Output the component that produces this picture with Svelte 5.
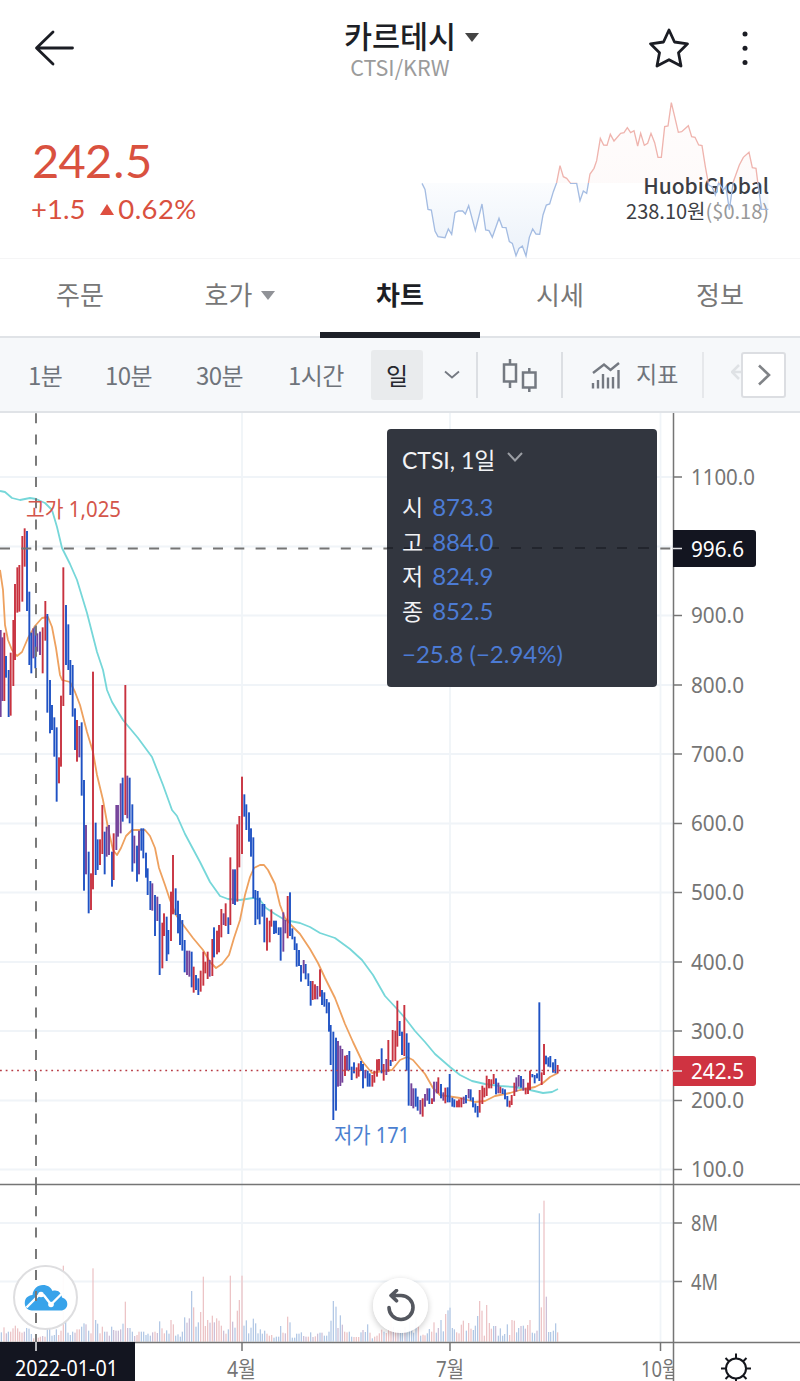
<script lang="ts">
	type Bar = { x: number; top: number; bottom: number; tone: string };

	const TABS = ['주문', '호가', '차트', '시세', '정보'];
	const RANGES = ['1분', '10분', '30분', '1시간'];
	let activeTab = $state('차트');

	const OHLC = [
		['시', '873.3'],
		['고', '884.0'],
		['저', '824.9'],
		['종', '852.5']
	];

	const PRICE_TICKS = [
		[477, '1100.0'],
		[615.5, '900.0'],
		[685, '800.0'],
		[754, '700.0'],
		[823.5, '600.0'],
		[892.5, '500.0'],
		[962, '400.0'],
		[1031, '300.0'],
		[1100.5, '200.0'],
		[1169.5, '100.0']
	] as const;
	const GRID_Y = [477, 546.5, 615.5, 685, 754, 823.5, 892.5, 962, 1031, 1100.5, 1169.5, 1223, 1281.5];
	const GRID_X = [242, 450, 660.5];

	// r = hausse, b = baisse, m = mixte. Coordonnées en tiers de pixel : x haut bas
	const CANDLES_A = `2 660 921m,7 682 873m,13 668 873r,18 738 803b,26 780 921b,32 728 917r,40 630 828r,45 522 750r,52 472 608r,58 465 605r,
67 378 575r,74 355 470r,81 363 603b,88 545 765b,94 668 790b,100 655 745m,106 650 775b,112 670 725m,120 665 735m,128 652 790r,
136 573 692r,142 612 908b,150 810 970b,156 885 960b,163 922 1040b,170 952 1175b,177 1042 1120r,183 857 1070r,190 472 888r,
198 585 765b,205 643 780b,211 750 855b,218 765 920b`;
	const CANDLES_B = `225 85 210b,231 120 245r,238 138 232m,245 127 347b,252 300 632b,258 435 583m,266 515 700b,273 580 690r,279 -25 628r,
287 428 585b,293 478 570b,300 478 555r,307 375 522r,314 455 583b,320 440 530m,327 435 525m,336 515 620b,341 460 600r,349 375 510m,
354 375 470m,362 310 460m,368 293 425b,376 15 405r,382 287 415m,389 293 430b,397 373 575b,403 467 550m,411 497 605b,417 452 583m,
424 445 512b,430 445 535b,438 518 593b,443 565 645b,451 603 690b,457 610 692m,465 645 768b,472 650 723m,479 672 885b,487 728 865r,
492 700 768r,500 710 843b,505 750 823b,513 635 783r,519 525 703r,527 625 705b,534 662 760b,540 702 795b,547 720 812b,554 780 877b,
561 812 885m,568 812 890m,575 815 922b,581 860 938r,588 885 930b,595 895 945b,602 872 935r,610 815 917r,616 845 880r,623 815 897r,
629 840 890m,637 777 888r,642 742 832b,651 752 823r,657 735 817r,664 687 772r,671 700 735m,677 670 738r,685 712 762b,691 532 735r,
699 568 672m,705 568 675b,712 433 665r,718 408 562r,726 290 522r,733 343 410b,739 373 450b,747 397 485b,753 445 530b,760 472 655b,
766 630 735b,773 633 718b,779 653 733b,787 672 710b,793 672 787b,801 713 812r,809 722 787r,814 688 740r,822 722 762b,828 722 760b,
836 742 765b,842 742 842b,850 697 815m,856 720 760m,863 648 775r,870 637 768b,877 745 778b,884 770 810b`;
	const CANDLES_C = `170 250 320b,177 270 318b,183 315 365b,191 300 340m,197 312 358b,205 340 378b,212 363 437b,218 363 420r,225 373 418r,
232 378 418m,240 328 410r,246 390 435b,253 397 440b,260 417 460b,267 427 515b,272 495 615b,280 515 780b,288 533 752b,294 543 680m,
301 557 678m,307 567 668m,315 587 648r,321 585 632m,328 573 630b,335 620 660b,342 607 640b,350 622 655r,356 610 650r,363 603 633b,
369 612 685b,376 630 655m,383 632 680b,389 640 680b,397 645 680r,403 632 668r,411 598 650r,417 597 632r,425 565 640b,431 612 662r,
439 597 645m,445 540 635r,452 600 618b,458 510 605r,466 512 603r,472 422 560r,479 483 528b,486 515 585b,493 435 588r,500 520 632b,
506 548 737b,514 670 738m,520 685 745m,527 685 740b,533 710 752b,541 720 763m,548 715 770r,555 702 740m,562 685 722m,568 685 732b,
576 715 732r,582 665 725m,590 665 700m,595 652 700r,603 672 715b,610 697 722m,616 683 730r,623 682 727b,629 642 727b,637 713 740b,
643 718 742b,651 722 742r,657 718 742r,664 713 742r,671 710 732m,678 705 730b,686 687 715m,692 688 722b,699 712 742b,706 730 758b,
713 738 772b,719 690 758r,727 677 732r,733 683 712r,740 647 708r,747 657 685r,754 658 685r,761 642 672r,768 655 703b,775 668 700m,
781 680 700r,788 685 702b,795 688 718b,802 708 740b,809 722 742r,815 705 735r,823 668 708r,829 652 695m,836 645 680m,843 648 683b,
850 657 692m,857 683 703r,864 668 702r,870 632 690r,877 642 652b,884 645 670b,891 640 655b,898 427 663b,905 637 675r,912 552 645r,
918 587 613b,925 592 620b,931 588 622b,939 607 638b,946 597 640b,953 615 640r`;

	const VOLUMES = `4 487b,12 472r,19 490m,25 485b,32 485r,39 475r,46 467r,53 475r,59 485r,66 488r,73 485m,80 474b,87 476b,94 492b,101 505r,
108 500m,115 503r,121 500r,128 498m,135 500r,142 475b,149 477b,156 497b,163 495b,169 478b,176 495r,183 482r,190 287r,197 455b,204 488b,
211 495b,218 485b,225 488m,231 478r,238 478r,245 470b,252 460b,258 463m,266 482b,273 490r,279 295r,287 450b,293 461b,300 490r,307 470r,
314 485b,321 485m,328 497m,335 470b,341 480m,348 482m,355 482m,362 478m,369 461b,376 395r,383 474m,390 474b,397 485b,404 498m,411 495r,
417 485r,424 485b,431 485b,438 495b,444 491b,451 497b,458 487m,465 485r,472 489m,479 454b,486 475r,493 490r,500 481b,507 491b,513 450r,
520 463r,527 497b,534 493b,541 500b,547 485b,554 442b,561 458m,568 445m,575 363b,581 412r,588 470b,595 457b,602 426r,610 320r,616 468r,
623 450r,630 458m,637 437r,643 457m,650 445r,657 452r,664 467r,671 482m,678 491r,685 478b,691 317r,698 455m,705 473b,712 422r,718 390r,
726 317r,732 467b,739 451b,746 490b,753 473b,760 446b,767 460b,774 490b,781 478b,787 491b,794 482b,801 491r,808 497r,815 495r,822 503b,
829 500b,836 500b,842 468b,849 488r,856 490m,863 440r,870 457b,877 503b,884 503b,890 491b,897 491b,904 487b,911 498m,918 500m,925 500r,
932 487b,939 501m,946 499r,953 491m,960 488b,966 488m,973 497b,980 497b,987 485b,993 452b,1000 393b,1008 410b,1014 474m,1021 436b,
1027 464m,1034 485r,1041 487r,1048 485b,1055 500b,1062 501r,1069 501r,1076 501r,1083 487b,1089 480m,1096 486b,1103 463b,1110 488r,
1117 505b,1124 500r,1131 497r,1138 490r,1145 479r,1152 485b,1159 489r,1166 480r,1173 445r,1180 470m,1187 485r,1194 480m,1201 480b,
1207 488b,1215 470m,1221 487b,1228 455b,1235 480b,1241 488b,1248 440b,1255 470r,1262 497b,1269 494r,1275 496r,1282 490b,1288 477b,
1295 485r,1302 457r,1309 488b,1315 474m,1323 450b,1330 484b,1337 432r,1344 421b,1350 413b,1357 474b,1363 478b,1370 487r,1377 490r,
1384 464r,1390 452r,1399 482b,1406 459r,1413 476r,1420 480b,1426 467b,1433 438b,1439 393r,1446 422r,1453 497r,1460 405r,1468 459r,
1474 476r,1481 468b,1487 468m,1495 497b,1501 475b,1508 497b,1514 492b,1522 463b,1529 495r,1536 450r,1543 452r,1550 487b,1556 474b,
1563 468m,1570 467b,1576 476m,1583 465r,1590 450r,1597 488b,1604 490b,1611 482m,1618 130b,1624 412r,1632 92r,1639 380m,1646 486b,
1652 486b,1660 482b,1667 460b,1673 487r`;

	const MA_SLOW = `0,491 5,492 12,498 20,500 30,498 36,499 45,503 52,510 57,527 62,548 70,564 77,580 87,613 97,652 103,670 107,690 112,702
123,720 138,738 152,757 163,785 172,810 177,816 185,834 200,862 210,882 220,896 228,899 240,900 253,898 260,900 266,908 275,914 285,920
300,923 310,927 320,933 335,938 350,949 362,960 373,975 385,996 398,1010 405,1018 415,1031 425,1042 435,1054 450,1067 460,1075 472,1081
485,1084 500,1086 515,1087 530,1090 543,1093 552,1092 558,1089`;
	const MA_FAST = `0,570 3,590 5,625 8,640 12,650 17,656 22,652 28,638 35,626 42,618 48,617 52,627 56,648 60,675 62,680 70,682 75,692
80,705 87,732 93,752 97,775 103,800 108,828 113,850 117,855 121,848 126,836 132,830 145,830 150,836 155,848 159,868 165,885 170,900
176,915 184,926 193,938 203,950 210,962 216,968 222,964 229,955 234,938 240,920 245,895 250,877 254,868 260,865 264,865 268,870 275,884
280,905 285,918 292,926 300,934 310,949 318,963 325,978 335,998 345,1024 353,1042 362,1061 372,1073 382,1071 392,1070 400,1060 407,1057
413,1060 425,1074 433,1088 440,1095 460,1098 475,1102 485,1101 495,1096 510,1093 520,1090 535,1087 543,1083 550,1077 558,1073`;

	const SPARK = `66,550 75,568 84,628 94,630 105,693 114,710 135,713 145,687 155,703 165,638 175,633 188,633 196,642 206,617 226,692
246,612 257,690 267,692 277,712 297,655 307,682 318,683 328,725 337,730 348,767 357,745 367,738 378,768 388,712 398,687 408,702 419,703
429,645 439,615 449,612 460,575 470,548 480,497 490,530 500,535 512,550 530,550 540,602 550,573 560,580 570,522 582,505 590,482 601,415
611,435 621,436 631,403 642,423 662,400 672,398 682,383 692,398 702,392 713,438 722,400 733,436 743,430 753,400 764,428 774,472 784,472
794,380 804,378 814,308 824,350 835,397 845,395 865,377 875,410 885,412 896,435 906,437 916,500 926,555 936,560 946,585 956,548 970,570
978,560 988,630 1000,545 1018,495 1030,472 1047,457 1057,503 1068,505 1075,560 1085,628 1105,628`;

	function parse(src: string, ox = 0, oy = 0): Bar[] {
		return src.split(',').map((s) => {
			const tone = s.slice(-1);
			const [x, top, bottom = 515] = s.trim().slice(0, -1).split(' ').map(Number);
			return { x: ox + x / 3, top: oy + top / 3, bottom: oy + bottom / 3, tone };
		});
	}

	const candles = [...parse(CANDLES_A, 0, 410), ...parse(CANDLES_B, 0, 680), ...parse(CANDLES_C, 240, 860)];
	const volumes = parse(VOLUMES, 0, 1170);
</script>

<div class="app">
	<header>
		<button class="icon back" aria-label="뒤로">
			<svg width="40" height="38" viewBox="0 0 40 38"><path d="M19 3 2.500 19 19 35M3 19h35.500" /></svg>
		</button>
		<div class="title">
			<h1>카르테시<i class="caret"></i></h1>
			<p>CTSI/KRW</p>
		</div>
		<button class="icon star" aria-label="관심">
			<svg width="42" height="42" viewBox="0 0 42 42"
				><path d="M21 3 26.500 15 39.500 16.800 30.500 25.800 33 39 21 32.700 9 39 11.500 25.800 2.500 16.800 15.500 15Z" /></svg
			>
		</button>
		<button class="icon more" aria-label="더보기">
			<svg width="8" height="36" viewBox="0 0 8 36"
				><circle cx="4" cy="4" r="2.500" /><circle cx="4" cy="18.300" r="2.500" /><circle cx="4" cy="32.600" r="2.500" /></svg
			>
		</button>
	</header>

	<section class="quote">
		<div class="now">
			<strong>242<em>.</em>5</strong>
			<p><span>+1.5</span><i class="up"></i><span class="pct">0.62%</span></p>
		</div>
		<div class="global">
			<b>HuobiGlobal</b>
			<p>238.10원<span>($0.18)</span></p>
		</div>
		<svg class="spark" width="400" height="260" viewBox="0 0 1200 780">
			<defs>
				<clipPath id="above"><rect width="1200" height="549" /></clipPath>
				<clipPath id="below"><rect y="549" width="1200" height="231" /></clipPath>
				<linearGradient id="red" x1="0" y1="300" x2="0" y2="549" gradientUnits="userSpaceOnUse">
					<stop stop-color="#e0857d" stop-opacity=".02" /><stop offset="1" stop-color="#e0857d" stop-opacity=".04" />
				</linearGradient>
				<linearGradient id="blue" x1="0" y1="549" x2="0" y2="770" gradientUnits="userSpaceOnUse">
					<stop stop-color="#7aa5dd" stop-opacity=".03" /><stop offset="1" stop-color="#7aa5dd" stop-opacity=".15" />
				</linearGradient>
			</defs>
			<g clip-path="url(#above)">
				<polygon points="66,549 {SPARK} 1105,549" fill="url(#red)" />
				<polyline points={SPARK} stroke="#efb4ae" />
			</g>
			<g clip-path="url(#below)">
				<polygon points="66,549 {SPARK} 1105,549" fill="url(#blue)" />
				<polyline points={SPARK} stroke="#a4bce2" />
			</g>
		</svg>
	</section>

	<nav>
		{#each TABS as tab (tab)}
			<button class:active={tab === activeTab} onclick={() => (activeTab = tab)}>
				{tab}{#if tab === '호가'}<i class="caret"></i>{/if}
			</button>
		{/each}
	</nav>

	<div class="toolbar">
		{#each RANGES as range, i (range)}
			<button class="range r{i}">{range}</button>
		{/each}
		<button class="day">일</button>
		<svg class="chev" width="16" height="10" viewBox="0 0 16 10"><path d="m1 1.500 7 6 7-6" /></svg>
		<i class="sep"></i>
		<svg class="candle" width="38" height="36" viewBox="0 0 38 36">
			<path d="M3 7.500h12v17H3ZM9 2v5M9 25v6M22 15.500h12.500v15H22ZM28.300 11v4M28.300 31v4" />
		</svg>
		<i class="sep"></i>
		<svg class="indicator" width="30" height="28" viewBox="0 0 30 28">
			<path d="m2 12 11-8.500 6.500 5.500L28 2" /><path d="M2 22v5.500M7 19v8.500M12 13v14.500M17 16.500v11M22 16v11.500M27.500 9v18.500" />
		</svg>
		<span class="label">지표</span>
		<i class="sep last"></i>
		<svg class="undo" width="10" height="18" viewBox="0 0 10 18"><path d="M8 2 1 9l7 7M1 9h9" /></svg>
		<button class="next" aria-label="다음">
			<svg width="14" height="22" viewBox="0 0 14 22"><path d="m2 1.500 10 9.500L2 20.500" /></svg>
		</button>
	</div>

	<main>
		<svg class="chart" width="800" height="968" viewBox="0 413 800 968">
			<g class="grid">
				{#each GRID_Y as y (y)}<path d="M0 {y}H673" />{/each}
				{#each GRID_X as x (x)}<path d="M{x} 413V1342" />{/each}
			</g>

			{#each volumes as v, i (i)}
				<rect class="vol {v.tone}" x={v.x - 0.6} y={v.top} width="1.200" height={v.bottom - v.top} />
			{/each}
			<polyline class="ma slow" points={MA_SLOW} />
			<polyline class="ma fast" points={MA_FAST} />
			{#each candles as c, i (i)}
				<rect class="candle-bar {c.tone}" x={c.x - 0.95} y={c.top} width="1.900" height={c.bottom - c.top} />
			{/each}

			<path class="last-price" d="M0 1070.500H673" />
			<path class="cross" d="M36 413.300V1184" stroke-dasharray="10 11.220" />
			<path class="cross" d="M36 1185V1342" stroke-dasharray="10 11.300" />
			<path class="cross" d="M0 548.500H673" stroke-dasharray="10 11.300" />
			<text class="high" x="26" y="517" textLength="95" lengthAdjust="spacingAndGlyphs">고가 1,025</text>
			<text class="low" x="334" y="1143" textLength="76" lengthAdjust="spacingAndGlyphs">저가 171</text>

			<path class="frame" d="M673.500 413V1381M0 1184.500H800M0 1342.500H800M242 1342v9M450 1342v9M660.500 1342v9" />
			{#each PRICE_TICKS as [y, label] (label)}
				<path class="frame" d="M673 {y}h9" />
				<text x="691" y={y + 7.5} textLength={label.length > 5 ? 64 : 53} lengthAdjust="spacingAndGlyphs">{label}</text>
			{/each}
			<path class="frame" d="M673 1223h9M673 1281.500h9" />
			<text x="691" y="1231" textLength="27" lengthAdjust="spacingAndGlyphs">8M</text>
			<text x="691" y="1289.500" textLength="27" lengthAdjust="spacingAndGlyphs">4M</text>

			<path class="tag dark" d="M673 530h80a3 3 0 0 1 3 3v31a3 3 0 0 1-3 3h-80Z" />
			<path class="tag red" d="M673 1056h80a3 3 0 0 1 3 3v24a3 3 0 0 1-3 3h-80Z" />
			<path class="tick" d="M673 548.500h9M673 1071h9" />
			<text class="on" x="691" y="557" textLength="53" lengthAdjust="spacingAndGlyphs">996.6</text>
			<text class="on" x="691" y="1079" textLength="53" lengthAdjust="spacingAndGlyphs">242.5</text>

			<text x="227" y="1377" textLength="29" lengthAdjust="spacingAndGlyphs">4월</text>
			<text x="436" y="1377" textLength="28" lengthAdjust="spacingAndGlyphs">7월</text>
			<clipPath id="plot"><rect y="1342" width="673" height="40" /></clipPath>
			<g clip-path="url(#plot)"><text x="641" y="1377" textLength="38" lengthAdjust="spacingAndGlyphs">10월</text></g>
			<rect class="tag dark" y="1342" width="135" height="39" />
			<path class="tick" d="M36 1342v9" />
			<text class="on" x="15" y="1375.500" textLength="103" lengthAdjust="spacingAndGlyphs">2022-01-01</text>

			<g class="gear">
				<circle cx="736" cy="1368.500" r="10" />
				<path
					d="M736 1358.500v-5M736 1378.500v5M726 1368.500h-5M746 1368.500h5M729 1361.500l-3.500-3.500M743 1361.500l3.500-3.500M729 1375.500l-3.500 3.500M743 1375.500l3.500 3.500"
				/>
			</g>
		</svg>

		<aside class="legend">
			<i class="ghost"></i>
			<h2>CTSI, 1일<svg width="18" height="12" viewBox="0 0 18 12"><path d="m2 2 7 7.500L16 2" /></svg></h2>
			{#each OHLC as [name, value] (name)}
				<p>{name}<span>{value}</span></p>
			{/each}
			<p class="delta">−25.8 (−2.94%)</p>
		</aside>

		<button class="round cloud" aria-label="TradingView">
			<svg width="44" height="28" viewBox="0 0 44 28">
				<path
					fill="#38a3ea"
					d="M8 26.500C3 26.500.5 22.500.8 18.500 1 14 4 11.500 8.500 11 9 5 13.500 1 19 1c4.500 0 8 2.300 9.500 6 5-1.500 9 1.500 9.500 6.500 3.500 1 5.300 3.500 5.300 6.500 0 4-3 6.500-6.500 6.500Z"
				/>
				<path d="M2.500 23.500 15 11l5 .500 7 9L38.500 9" fill="none" stroke="#fff" stroke-width="2.400" />
				<circle cx="17" cy="10.500" r="2.800" fill="#fff" /><circle cx="27" cy="20.500" r="2.800" fill="#fff" />
			</svg>
		</button>
		<button class="round reset" aria-label="초기화">
			<svg width="30" height="34" viewBox="0 0 30 34"><path d="M3 18.500a12 12 0 1 0 12-12H5M10.500 1.500 5 6.500l5.500 5.300" /></svg>
		</button>
		<i class="cross-over"></i>
	</main>
</div>

<style>
	:global(body) { margin: 0; background: #fff; }
	.app { width: 800px; height: 1381px; overflow: hidden; font-family: Lato, 'Noto Sans CJK KR', sans-serif; color: #1d1f26; }
	button { padding: 0; border: 0; background: none; font: inherit; color: inherit; cursor: pointer; }
	h1, h2, p { margin: 0; font-weight: 400; }
	svg { display: block; fill: none; }

	header { display: flex; height: 100px; box-sizing: border-box; padding: 0 51px 0 34px; }
	.icon { display: flex; align-items: center; height: 96px; stroke: #1b1d24; stroke-width: 2.8; stroke-linecap: round; stroke-linejoin: round; }
	.title { flex: 1; display: flex; flex-direction: column; align-items: center; padding: 16px 0 0 81px; font-family: 'Noto Sans CJK KR', sans-serif; }
	.title h1 { display: flex; align-items: center; margin-left: 20px; font-size: 30.500px; line-height: 39px; font-weight: 500; }
	.title .caret { margin-top: 4px; }
	.title p { margin-left: -3px; font-size: 21.500px; line-height: 24px; color: #9b9b9b; }
	.caret { margin-left: 9px; border: 7.500px solid transparent; border-top: 9.500px solid #444; border-bottom: 0; }
	.star { margin-right: 51px; }
	.more { stroke: none; fill: #1b1d24; }
	.more svg { fill: inherit; }

	.quote { position: relative; display: flex; justify-content: space-between; height: 158px; border-bottom: 1px solid #f5f5f6; color: #d9513f; }
	.now { padding: 32px 0 0 32px; }
	.now strong { display: block; font-size: 47px; line-height: 56px; font-weight: 400; letter-spacing: -0.7px; }
	.now em { margin: 0 1.500px; font-style: normal; }
	.now p { display: flex; align-items: center; margin: 3px 0 0 -1px; font-size: 27.500px; line-height: 36px; }
	.now .pct { letter-spacing: 0.4px; }
	.up { margin: 0 4px 0 15px; border: 7.500px solid transparent; border-bottom: 11.500px solid #de4f40; border-top: 0; }
	.global { padding: 72px 31px 0 0; text-align: right; font-family: 'Noto Sans CJK KR', sans-serif; color: #3c3e44; }
	.global b { display: block; font-size: 21px; line-height: 26px; font-weight: 500; }
	.global p { font-size: 20px; line-height: 26px; }
	.global span { color: #999; }
	.spark { position: absolute; right: 0; bottom: -2px; }
	.spark polyline { stroke-width: 4; }

	nav { display: flex; height: 79px; box-sizing: border-box; border-bottom: 2px solid #e0e3e7; font-family: 'Noto Sans CJK KR', sans-serif; font-size: 26px; color: #777; }
	nav button { flex: 1; display: flex; align-items: center; justify-content: center; height: 79px; box-sizing: border-box; padding-bottom: 11px; }
	nav .caret { margin-top: 4px; border-top-color: #909297; }
	nav .active { color: #1c1e25; font-weight: 700; border-bottom: 6px solid #1d2028; padding-bottom: 5px; }

	.toolbar { display: flex; align-items: center; height: 75px; box-sizing: border-box; border-bottom: 2px solid #e0e3e7; background: #f6f8fa; padding-left: 28px; font-family: 'Noto Sans CJK KR', sans-serif; font-size: 24px; color: #6f747b; stroke: #747981; }
	.toolbar > * { flex: none; }
	.toolbar button, .toolbar .label { line-height: 50px; text-align: left; stroke: none; white-space: nowrap; }
	.toolbar .range { letter-spacing: -0.6px; }
	.toolbar .r0 { width: 77px; }
	.toolbar .r1 { width: 91px; }
	.toolbar .r2 { width: 92px; }
	.toolbar .r3 { width: 83px; }
	.toolbar .day { width: 52px; height: 50px; text-align: center; border-radius: 3px; background: #e9ebed; color: #26282f; }
	.chev { margin: 0 16px 0 21px; stroke-width: 1.8; }
	.sep { width: 2px; height: 46px; background: #dcdfe3; }
	.candle { margin: 0 22px 0 23px; stroke-width: 2.500; }
	.indicator { margin: 0 15px 0 28px; stroke-width: 2.400; }
	.toolbar .label { width: 43px; margin-top: -4px; font-size: 23px; }
	.sep.last { margin-left: 23px; background: #e6e8eb; }
	.undo { margin: -6px 0 0 27px; stroke: #dfe2e5; stroke-width: 2.500; }
	.toolbar .next { display: flex; align-items: center; justify-content: center; width: 45px; height: 46px; box-sizing: border-box; border: 2px solid #dcdee2; border-radius: 3px; background: #fff; stroke: #808387; stroke-width: 2.600; }

	main { position: relative; height: 968px; }
	.grid { stroke: #f0f4f8; stroke-width: 1.800; }
	.chart text { font-family: 'Noto Sans', 'Noto Sans CJK KR', sans-serif; font-size: 21.500px; fill: #757575; }
	.chart .on { fill: #fff; }
	.chart .high { fill: #d4564b; }
	.chart .low { fill: #4b7fd0; }
	.vol.r { fill: #ebc0c3; }
	.vol.b { fill: #aec5e4; }
	.vol.m { fill: #cabbd5; }
	.candle-bar.r { fill: #c8323f; }
	.candle-bar.b { fill: #1f52c4; }
	.candle-bar.m { fill: #74439a; }
	.ma { stroke-width: 1.800; stroke-linejoin: round; }
	.slow { stroke: #76d7d9; }
	.fast { stroke: #eea15f; }
	.last-price { stroke: #b83c46; stroke-width: 1.600; stroke-dasharray: 1.800 3.900; }
	.cross { stroke: #757575; stroke-width: 1.900; }
	.frame { stroke: #757575; stroke-width: 1.500; }
	.tag.dark { fill: #131520; }
	.tag.red { fill: #cf3341; }
	.tick { stroke: #e2e2e5; stroke-width: 1.600; }
	.gear { stroke: #14161c; stroke-width: 2; }

	.legend { position: absolute; left: 387px; top: 16px; width: 270px; height: 258px; box-sizing: border-box; padding: 13px 15px; border-radius: 4px; background: #32363f; color: #f2f3f5; isolation: isolate; }
	.legend h2 { display: flex; align-items: center; margin-bottom: 11px; font-size: 23px; line-height: 36px; }
	.legend h2 svg { margin: -6px 0 0 11px; stroke: #9b9ea4; stroke-width: 2; }
	.legend p { height: 34.700px; line-height: 35px; font-size: 23px; }
	.legend p span { margin-left: 9px; font-size: 24px; color: #4c7bd4; }
	.legend .delta { margin-top: 8px; color: #4c7bd4; font-size: 24px; }
	.ghost { position: absolute; z-index: -1; left: 0; right: 0; top: 118px; height: 2px; background: repeating-linear-gradient(90deg, #22252d 0 6px, transparent 6px 17.200px, #22252d 17.200px 21.300px); }

	.round { position: absolute; display: flex; align-items: center; justify-content: center; border-radius: 50%; background: rgba(255, 255, 255, 0.94); }
	.cloud { left: 13px; top: 852px; width: 65px; height: 65px; box-sizing: border-box; border: 2px solid #dedee0; }
	.reset { left: 373px; top: 865px; width: 55px; height: 55px; box-shadow: 0 2px 6px rgba(0, 0, 0, 0.22); stroke: #54575f; stroke-width: 3.600; stroke-linejoin: round; stroke-linecap: round; }
	.cross-over { position: absolute; left: 35px; top: 857px; width: 2px; height: 60px; background: repeating-linear-gradient(#757575 0 10px, transparent 10px 21.300px); }
</style>
